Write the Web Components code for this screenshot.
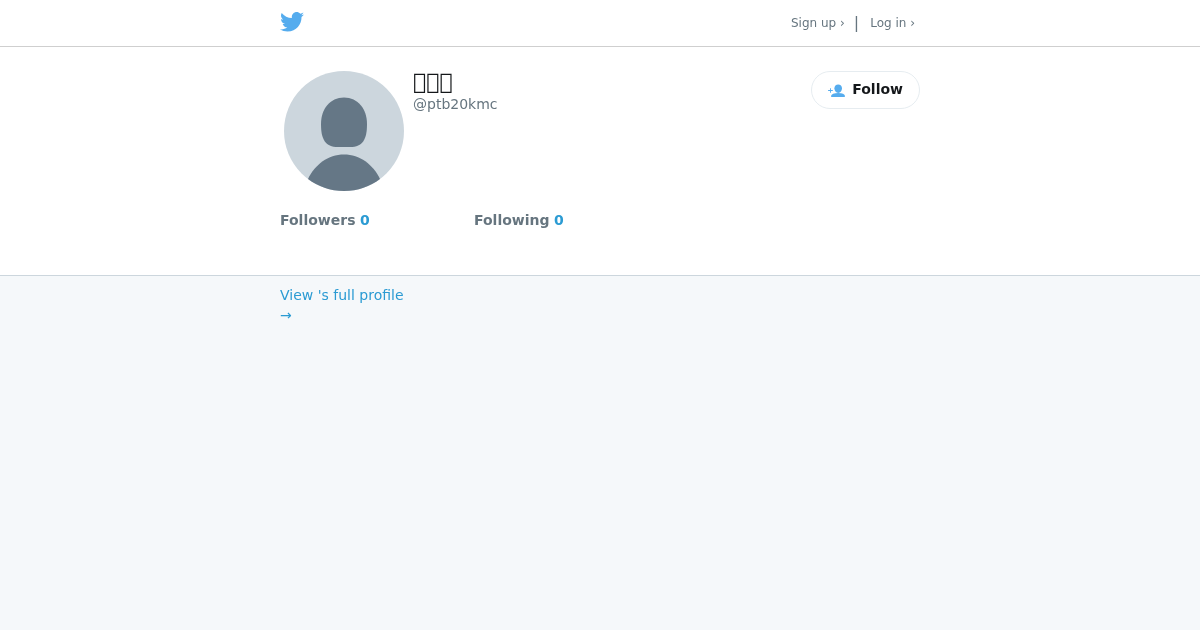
<!DOCTYPE html>
<html>
<head>
<meta charset="utf-8">
<title>Profile</title>
<style>
  html, body { margin: 0; height: 100%; }
  body { background: #f5f8fa; font-family: "DejaVu Sans", sans-serif; }
</style>
</head>
<body>
<tw-header></tw-header>
<tw-profile handle="@ptb20kmc" followers="0" following="0">&#xE000;&#xE001;&#xE002;</tw-profile>
<tw-footer-link>View 's full profile →</tw-footer-link>
<script>
(function () {
  const birdSVG = `
    <svg width="24" height="20" viewBox="0 0 24 20" aria-hidden="true">
      <path fill="#55acee" d="M24 2.4c-.9.4-1.8.7-2.8.8 1-.6 1.8-1.6 2.2-2.7-1 .6-2 1-3.100 1.200C19.300.7 18 .1 16.700.1c-2.700 0-4.900 2.200-4.900 4.900 0 .4 0 .8.100 1.100C7.800 5.900 4.200 4 1.700.9c-.4.700-.7 1.600-.7 2.500 0 1.700.9 3.200 2.200 4.100-.8 0-1.600-.2-2.200-.6v.1c0 2.400 1.700 4.400 3.900 4.800-.4.100-.8.200-1.300.2-.3 0-.6 0-.9-.1.600 2 2.400 3.400 4.600 3.400-1.700 1.300-3.800 2.100-6.100 2.100-.4 0-.8 0-1.200-.1 2.200 1.400 4.800 2.200 7.500 2.200 9.100 0 14-7.500 14-14v-.6c1-.7 1.800-1.600 2.500-2.500z"/>
    </svg>`;

  const followSVG = `
    <svg width="17" height="13" viewBox="0 0 17 13" aria-hidden="true">
      <path fill="#55acee" d="M10.200 .5c2.200 0 3.800 1.600 3.800 3.700 0 2.500-1.600 4.700-3.800 4.700S6.400 6.700 6.400 4.200C6.400 2.100 8 .5 10.200 .5z"/>
      <path fill="#55acee" d="M3 12c.4-1.900 3-3 7.200-3s6.400 1.100 6.800 3c.1.500-.2.900-.7.900H3.700c-.5 0-.8-.4-.7-.9z"/>
      <path fill="#55acee" d="M2 4.200h.9V6h1.900v.9H2.900v1.900H2V6.900H.1V6H2z"/>
    </svg>`;

  const avatarSVG = `
    <svg width="120" height="120" viewBox="0 0 120 120" aria-hidden="true">
      <circle cx="60" cy="60" r="60" fill="#ccd6dd"/>
      <path fill="#657786" d="M60 26.500C74 26.500 83 38 83 53 83 68 79 76 66 76H54C41 76 37 68 37 53 37 38 46 26.500 60 26.500z"/>
      <path fill="#657786" d="M24 108c7-14.500 20-24.500 36-24.500S89 93.500 96 108c-10 7.500-22 12-36 12s-26-4.500-36-12z"/>
    </svg>`;

  class TwHeader extends HTMLElement {
    connectedCallback() {
      if (!this.shadowRoot) this.attachShadow({mode: 'open'});
      this.shadowRoot.innerHTML = `
        <style>
          :host { display:block; background:#fff; border-bottom:1px solid #cfcfcf; }
          .wrap { width:640px; height:46px; margin:0 auto; display:flex; align-items:flex-start; justify-content:space-between; will-change:transform; }
          .logo { display:block; margin-top:12px; line-height:0; }
          nav { display:flex; align-items:center; height:46px; font-size:12px; color:#66757f; padding-right:5px; }
          .sep { font-size:16px; margin:0 11px 2px 9px; }
        </style>
        <div class="wrap">
          <span class="logo">${birdSVG}</span>
          <nav><span>Sign up ›</span><span class="sep">|</span><span>Log in ›</span></nav>
        </div>`;
    }
  }

  class TwFollowButton extends HTMLElement {
    connectedCallback() {
      if (!this.shadowRoot) this.attachShadow({mode: 'open'});
      this.shadowRoot.innerHTML = `
        <style>
          :host { display:inline-flex; align-items:center; box-sizing:border-box; height:38px; padding:0 16px; gap:7px;
                  background:#fff; border:1px solid #e6ecf0; border-radius:19px; font-size:14px; font-weight:bold; color:#14171a; }
          svg { display:block; }
          span { margin-bottom:2px; }
        </style>
        ${followSVG}<span><slot></slot></span>`;
    }
  }

  class TwStat extends HTMLElement {
    connectedCallback() {
      if (!this.shadowRoot) this.attachShadow({mode: 'open'});
      this.shadowRoot.innerHTML = `
        <style>
          :host { display:block; font-size:14px; color:#66757f; }
          b { font-weight:bold; }
          .n { color:#2b9bd3; }
        </style>
        <b><slot></slot></b> <b class="n">${this.getAttribute('value')}</b>`;
    }
  }

  class TwProfile extends HTMLElement {
    connectedCallback() {
      if (!this.shadowRoot) this.attachShadow({mode: 'open'});
      this.shadowRoot.innerHTML = `
        <style>
          :host { display:block; background:#fff; border-bottom:1px solid #ccd6dd; }
          .wrap { box-sizing:border-box; width:640px; height:228px; margin:0 auto; padding-top:24px; will-change:transform; }
          .top { display:flex; align-items:flex-start; height:120px; }
          .avatar { margin-left:4px; line-height:0; }
          .names { margin-left:9px; flex:1; }
          .name { font-size:22px; line-height:22px; color:#14171a; }
          .handle { font-size:14px; line-height:18px; margin-top:2px; color:#66757f; }
          .stats { display:grid; grid-template-columns:194px auto; justify-content:start; margin-top:21px; }
        </style>
        <div class="wrap">
          <div class="top">
            <div class="avatar">${avatarSVG}</div>
            <div class="names">
              <div class="name"><slot></slot></div>
              <div class="handle">${this.getAttribute('handle')}</div>
            </div>
            <tw-follow-button>Follow</tw-follow-button>
          </div>
          <div class="stats">
            <tw-stat value="${this.getAttribute('followers')}">Followers</tw-stat>
            <tw-stat value="${this.getAttribute('following')}">Following</tw-stat>
          </div>
        </div>`;
    }
  }

  class TwFooterLink extends HTMLElement {
    connectedCallback() {
      if (!this.shadowRoot) this.attachShadow({mode: 'open'});
      this.shadowRoot.innerHTML = `
        <style>
          :host { display:block; }
          .wrap { width:640px; margin:0 auto; padding-top:9px; will-change:transform; }
          a { display:block; width:130px; font-size:14px; line-height:20px; color:#2b9bd3; text-decoration:none; }
        </style>
        <div class="wrap"><a href="#"><slot></slot></a></div>`;
    }
  }

  customElements.define('tw-follow-button', TwFollowButton);
  customElements.define('tw-stat', TwStat);
  customElements.define('tw-header', TwHeader);
  customElements.define('tw-profile', TwProfile);
  customElements.define('tw-footer-link', TwFooterLink);
})();
</script>
</body>
</html>
